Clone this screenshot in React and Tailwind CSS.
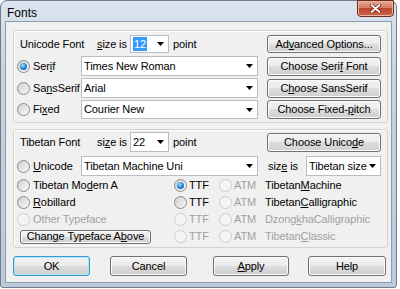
import React from "react";

const Radio = ({ checked, disabled }) => (
  <span
    className={`w-[13px] h-[13px] shrink-0 rounded-full border flex items-center justify-center ${
      disabled
        ? "border-[#cdcdcd] bg-[#f4f4f4]"
        : "border-[#8a8a8a] bg-[linear-gradient(135deg,#cfcfcf,#f9f9f9)]"
    }`}
  >
    {checked && (
      <span className="w-[7px] h-[7px] rounded-full bg-[radial-gradient(circle_at_40%_35%,#a8e6ff_0%,#2f8fd8_45%,#0b4f8f_100%)]" />
    )}
  </span>
);

const Arrow = () => (
  <svg width="7" height="4" viewBox="0 0 7 4" className="shrink-0">
    <path d="M0 0h7L3.5 4z" fill="#000" />
  </svg>
);

const Combo = ({ w, children }) => (
  <div className={`h-full bg-white border border-[#b9bdc4] flex items-center pl-[2px] pr-[4px] ${w}`}>
    <div className="flex-1 overflow-hidden whitespace-nowrap flex items-center">{children}</div>
    <Arrow />
  </div>
);

const Btn = ({ children, className, def }) => (
  <div
    className={`flex items-center justify-center rounded-[3px] border whitespace-pre bg-[linear-gradient(to_bottom,#f3f3f3_0%,#ebebeb_48%,#dddddd_50%,#cfcfcf_100%)] ${
      def
        ? "border-[#3c98d0] shadow-[inset_0_0_0_1px_#aee5f9]"
        : "border-[#707070] shadow-[inset_0_0_0_1px_#fbfbfb]"
    } ${className}`}
  >
    {children}
  </div>
);

const TibRow = ({ left, ttf, ttfDisabled, name, nameDisabled }) => (
  <div className="h-[17px] flex items-center">
    <div className="w-[157px] flex items-center">{left}</div>
    <div className="w-[45px] flex items-center">
      <Radio checked={ttf} disabled={ttfDisabled} />
      <span className={`ml-[2px] ${ttfDisabled ? "text-[#a0a0a0]" : ""}`}>TTF</span>
    </div>
    <div className="w-[46px] flex items-center">
      <Radio disabled />
      <span className="ml-[2px] text-[#a0a0a0]">ATM</span>
    </div>
    <span className={nameDisabled ? "text-[#a0a0a0]" : ""}>{name}</span>
  </div>
);

export default function App() {
  return (
    <div className="w-[400px] h-[289px] bg-white font-['Liberation_Sans',Arial,sans-serif] text-[11px] tracking-[-0.1px] text-black leading-none">
      <div className="w-[397px] h-[288px] rounded-t-[7px] rounded-b-[3px] border border-[#6e7c8c] bg-[linear-gradient(to_bottom,#dbe5ef_0%,#c6d3e1_25%,#bccad9_100%)] flex flex-col px-[4px] pb-[4px]">
        <div className="h-[20px] flex items-start justify-between">
          <span className="pl-[2px] pt-[6px] text-[12px] tracking-normal">Fonts</span>
          <div className="-mt-[1px] -mr-[2px] w-[37px] h-[17px] rounded-b-[4px] border border-[#6b2a20] bg-[linear-gradient(to_bottom,#eaa897_0%,#d67864_45%,#bd4630_50%,#cf6447_100%)] flex items-center justify-center shadow-[inset_0_0_0_1px_#f0b5a5]">
            <svg width="11" height="9" viewBox="0 0 11 9">
              <path d="M1.5 1 L9.5 8 M9.5 1 L1.5 8" stroke="#5a1e14" strokeWidth="3.2" strokeLinecap="round" />
              <path d="M1.5 1 L9.5 8 M9.5 1 L1.5 8" stroke="#ffffff" strokeWidth="1.8" strokeLinecap="round" />
            </svg>
          </div>
        </div>
        <div className="flex-1 border border-[#8c9db1] bg-[#f0f0f0] flex flex-col">
          {/* Unicode panel */}
          <div className="mt-[8px] ml-[7px] w-[375px] h-[93px] rounded-[3px] border border-[#d3d3d3] shadow-[inset_1px_1px_0_#ffffff] flex flex-col pl-[3px] pr-[6px] pt-[4px]">
            <div className="h-[18px] flex items-center">
              <span className="w-[80px] pl-[3px]">Unicode Font</span>
              <span className="w-[33px]">
                <u>s</u>ize is
              </span>
              <Combo w="w-[39px]">
                <span className="h-[14px] bg-[#3399ff] text-white px-[1px] flex items-center">12</span>
              </Combo>
              <span className="ml-[4px]">point</span>
              <Btn className="ml-auto w-[114px] h-[18px]">
                Ad<u>v</u>anced Options...
              </Btn>
            </div>
            <div className="mt-[3px] h-[20px] flex items-center">
              <div className="w-[64px] flex items-center">
                <Radio checked />
                <span className="ml-[3px]">
                  Ser<u>i</u>f
                </span>
              </div>
              <Combo w="w-[177px]">Times New Roman</Combo>
              <Btn className="ml-auto w-[114px] h-[19px]">
                <span>
                  Choose Seri<u>f</u>{" "}Font
                </span>
              </Btn>
            </div>
            <div className="mt-[2px] h-[20px] flex items-center">
              <div className="w-[64px] flex items-center">
                <Radio />
                <span className="ml-[3px]">
                  Sa<u>n</u>sSerif
                </span>
              </div>
              <Combo w="w-[177px]">Arial</Combo>
              <Btn className="ml-auto w-[114px] h-[19px]">
                <span>
                  C<u>h</u>oose SansSerif
                </span>
              </Btn>
            </div>
            <div className="mt-[2px] h-[19px] flex items-center">
              <div className="w-[64px] flex items-center">
                <Radio />
                <span className="ml-[3px]">
                  Fi<u>x</u>ed
                </span>
              </div>
              <Combo w="w-[177px]">Courier New</Combo>
              <Btn className="ml-auto w-[114px] h-[19px]">
                <span>
                  Choose Fixed-<u>p</u>itch
                </span>
              </Btn>
            </div>
          </div>

          {/* Tibetan panel */}
          <div className="mt-[6px] ml-[7px] w-[375px] h-[119px] rounded-[3px] border border-[#d3d3d3] shadow-[inset_1px_1px_0_#ffffff] flex flex-col pl-[3px] pr-[6px] pt-[2px]">
            <div className="h-[20px] flex items-center">
              <span className="w-[80px] pl-[3px]">Tibetan Font</span>
              <span className="w-[33px]">
                si<u>z</u>e is
              </span>
              <Combo w="w-[39px]">22</Combo>
              <span className="ml-[4px]">point</span>
              <Btn className="ml-auto w-[114px] h-[19px]">
                <span>
                  Choose Unico<u>d</u>e
                </span>
              </Btn>
            </div>
            <div className="mt-[4px] h-[20px] flex items-center">
              <div className="w-[64px] flex items-center">
                <Radio />
                <span className="ml-[3px]">
                  <u>U</u>nicode
                </span>
              </div>
              <Combo w="w-[177px]">Tibetan Machine Uni</Combo>
              <span className="ml-[10px] w-[38px]">
                siz<u>e</u> is
              </span>
              <Combo w="w-[75px]">Tibetan size</Combo>
            </div>
            <div className="mt-[1px] flex flex-col">
              <TibRow
                left={
                  <>
                    <Radio />
                    <span className="ml-[3px]">
                      Tibetan Mo<u>d</u>ern A
                    </span>
                  </>
                }
                ttf
                name={
                  <>
                    Tibetan<u>M</u>achine
                  </>
                }
              />
              <TibRow
                left={
                  <>
                    <Radio />
                    <span className="ml-[3px]">
                      <u>R</u>obillard
                    </span>
                  </>
                }
                name={
                  <>
                    Tibetan<u>C</u>alligraphic
                  </>
                }
              />
              <TibRow
                left={
                  <>
                    <Radio disabled />
                    <span className="ml-[3px] text-[#a0a0a0]">Other Typeface</span>
                  </>
                }
                ttfDisabled
                nameDisabled
                name={
                  <>
                    Dzong<u>k</u>haCalligraphic
                  </>
                }
              />
              <TibRow
                left={
                  <Btn className="ml-[3px] w-[131px] h-[14px]">
                    <span>
                      Change Typeface A<u>b</u>ove
                    </span>
                  </Btn>
                }
                ttfDisabled
                nameDisabled
                name={
                  <>
                    Tibetan<u>C</u>lassic
                  </>
                }
              />
            </div>
          </div>

          {/* Bottom buttons */}
          <div className="mt-[8px] h-[20px] flex items-center">
            <Btn def className="ml-[7px] w-[77px] h-[20px]">
              OK
            </Btn>
            <Btn className="ml-[20px] w-[77px] h-[20px]">Cancel</Btn>
            <Btn className="ml-[26px] w-[76px] h-[20px]">
              <span>
                <u>A</u>pply
              </span>
            </Btn>
            <Btn className="ml-[19px] w-[78px] h-[20px]">Help</Btn>
          </div>
        </div>
      </div>
    </div>
  );
}
